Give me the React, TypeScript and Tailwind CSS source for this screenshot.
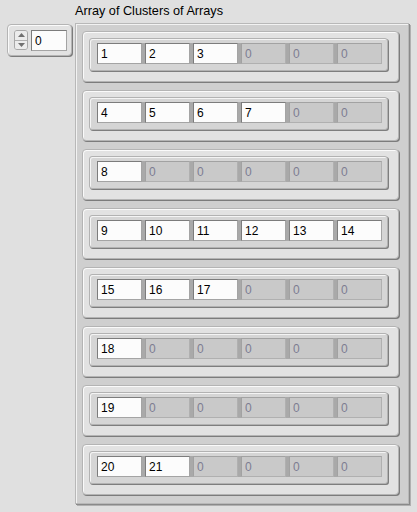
const rows: number[][] = [
  [1, 2, 3],
  [4, 5, 6, 7],
  [8],
  [9, 10, 11, 12, 13, 14],
  [15, 16, 17],
  [18],
  [19],
  [20, 21],
]

function Field({ value, active }: { value: number | string; active: boolean }) {
  return (
    <div
      className={
        active
          ? 'w-[45px] h-full flex items-center pl-[3px] bg-[#fcfcfc] border border-[#a4a4a4] border-t-[#7c7c7c] border-l-[#7c7c7c] text-black'
          : 'w-[45px] h-full flex items-center pl-[3px] bg-[#c9c9c9] border border-[#b0b0b0] border-t-[#a2a2a2] border-l-[#a2a2a2] text-[#7d7d92]'
      }
    >
      {value}
    </div>
  )
}

function ClusterRow({ values }: { values: number[] }) {
  return (
    <div className="w-[317px] h-[51px] rounded-[4px] bg-[#e2e2e2] border border-[#b4b4b4] shadow-[inset_1px_1px_0_#fafafa,1px_1px_0_#7c7c7c] pl-[6px] pt-[6px]">
      <div className="w-[299px] h-[33px] rounded-[3px] bg-[#d5d5d5] border border-[#b2b2b2] shadow-[inset_1px_1px_0_#f4f4f4,1px_1px_0_#7e7e7e] pl-[7px] pt-[4px]">
        <div className="flex gap-[3px] h-[21px] w-fit bg-[#a9a9a9]">
          {Array.from({ length: 6 }).map((_, i) => (
            <Field key={i} value={i < values.length ? values[i] : 0} active={i < values.length} />
          ))}
        </div>
      </div>
    </div>
  )
}

function IndexControl() {
  return (
    <div className="mt-[24px] ml-[7px] w-[65px] h-[32px] rounded-[4px] bg-[#e2e2e2] border border-[#b4b4b4] shadow-[inset_1px_1px_0_#fafafa,1px_1px_0_#7c7c7c] flex items-start pl-[6px] pt-[5px] gap-[3px]">
      <div className="w-[14px] h-[20px] flex flex-col rounded-[3px] border border-[#a8a8a8] bg-[#dcdcdc]">
        <div className="flex-1 flex items-center justify-center border-b border-[#b0b0b0] bg-[#ececec] rounded-t-[2px]">
          <svg width="7" height="4" viewBox="0 0 7 4">
            <path d="M0 4 L3.5 0 L7 4 Z" fill="#707070" />
          </svg>
        </div>
        <div className="flex-1 flex items-center justify-center bg-[#ececec] rounded-b-[2px]">
          <svg width="7" height="4" viewBox="0 0 7 4">
            <path d="M0 0 L3.5 4 L7 0 Z" fill="#707070" />
          </svg>
        </div>
      </div>
      <div className="w-[36px] h-[21px] flex items-center pl-[3px] bg-[#fcfcfc] border border-[#a4a4a4] border-t-[#7c7c7c] border-l-[#7c7c7c] text-black">
        0
      </div>
    </div>
  )
}

export default function App() {
  return (
    <div className="w-[417px] h-[512px] bg-[#e0e0e0] flex items-start text-[12px] font-['Liberation_Sans',Arial,sans-serif] overflow-hidden">
      <IndexControl />
      <div className="ml-[3px] flex flex-col">
        <div className="h-[23px] pt-[4px] leading-[15px] text-[12.7px] text-black">Array of Clusters of Arrays</div>
        <div className="w-[334px] h-[481px] bg-[#cfcfcf] border border-[#b8b8b8] shadow-[inset_1px_1px_0_#f2f2f2,1px_1px_0_#8a8a8a,2px_2px_0_#b0b0b0] pl-[6px] pt-[7px] flex flex-col gap-[8px]">
          {rows.map((r, i) => (
            <ClusterRow key={i} values={r} />
          ))}
        </div>
      </div>
    </div>
  )
}
